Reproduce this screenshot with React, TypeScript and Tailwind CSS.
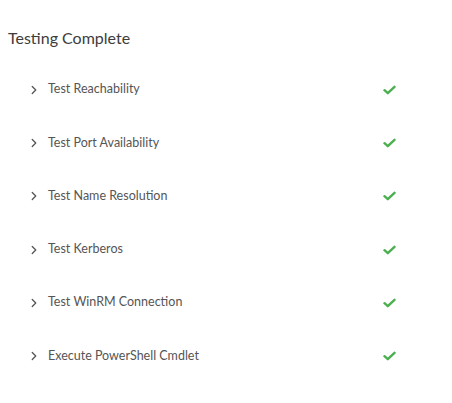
import { ChevronRight } from "lucide-react"

const tests = [
  "Test Reachability",
  "Test Port Availability",
  "Test Name Resolution",
  "Test Kerberos",
  "Test WinRM Connection",
  "Execute PowerShell Cmdlet",
]

function Check() {
  return (
    <svg width="13" height="10" viewBox="0 0 13 10" fill="none">
      <path d="M1.5 5.2 L4.8 8.2 L11.5 1.8" stroke="#4caf50" strokeWidth="2.4" strokeLinecap="round" strokeLinejoin="round" />
    </svg>
  )
}

export default function App() {
  return (
    <div className="w-[452px] h-[403px] bg-white font-['Lato',sans-serif]">
      <div className="pt-[28px] pl-[8px] text-[16px] leading-[20px] text-[#3d3d3d]">Testing Complete</div>
      <ul className="mt-[15px]">
        {tests.map((t) => (
          <li key={t} className="flex items-center h-[53.3px]">
            <ChevronRight className="ml-[27px] w-[14px] h-[14px] text-[#555]" strokeWidth={2.2} />
            <span className="ml-[7px] text-[12.5px] text-[#555]">{t}</span>
            <span className="ml-auto mr-[56px]">
              <Check />
            </span>
          </li>
        ))}
      </ul>
    </div>
  )
}
